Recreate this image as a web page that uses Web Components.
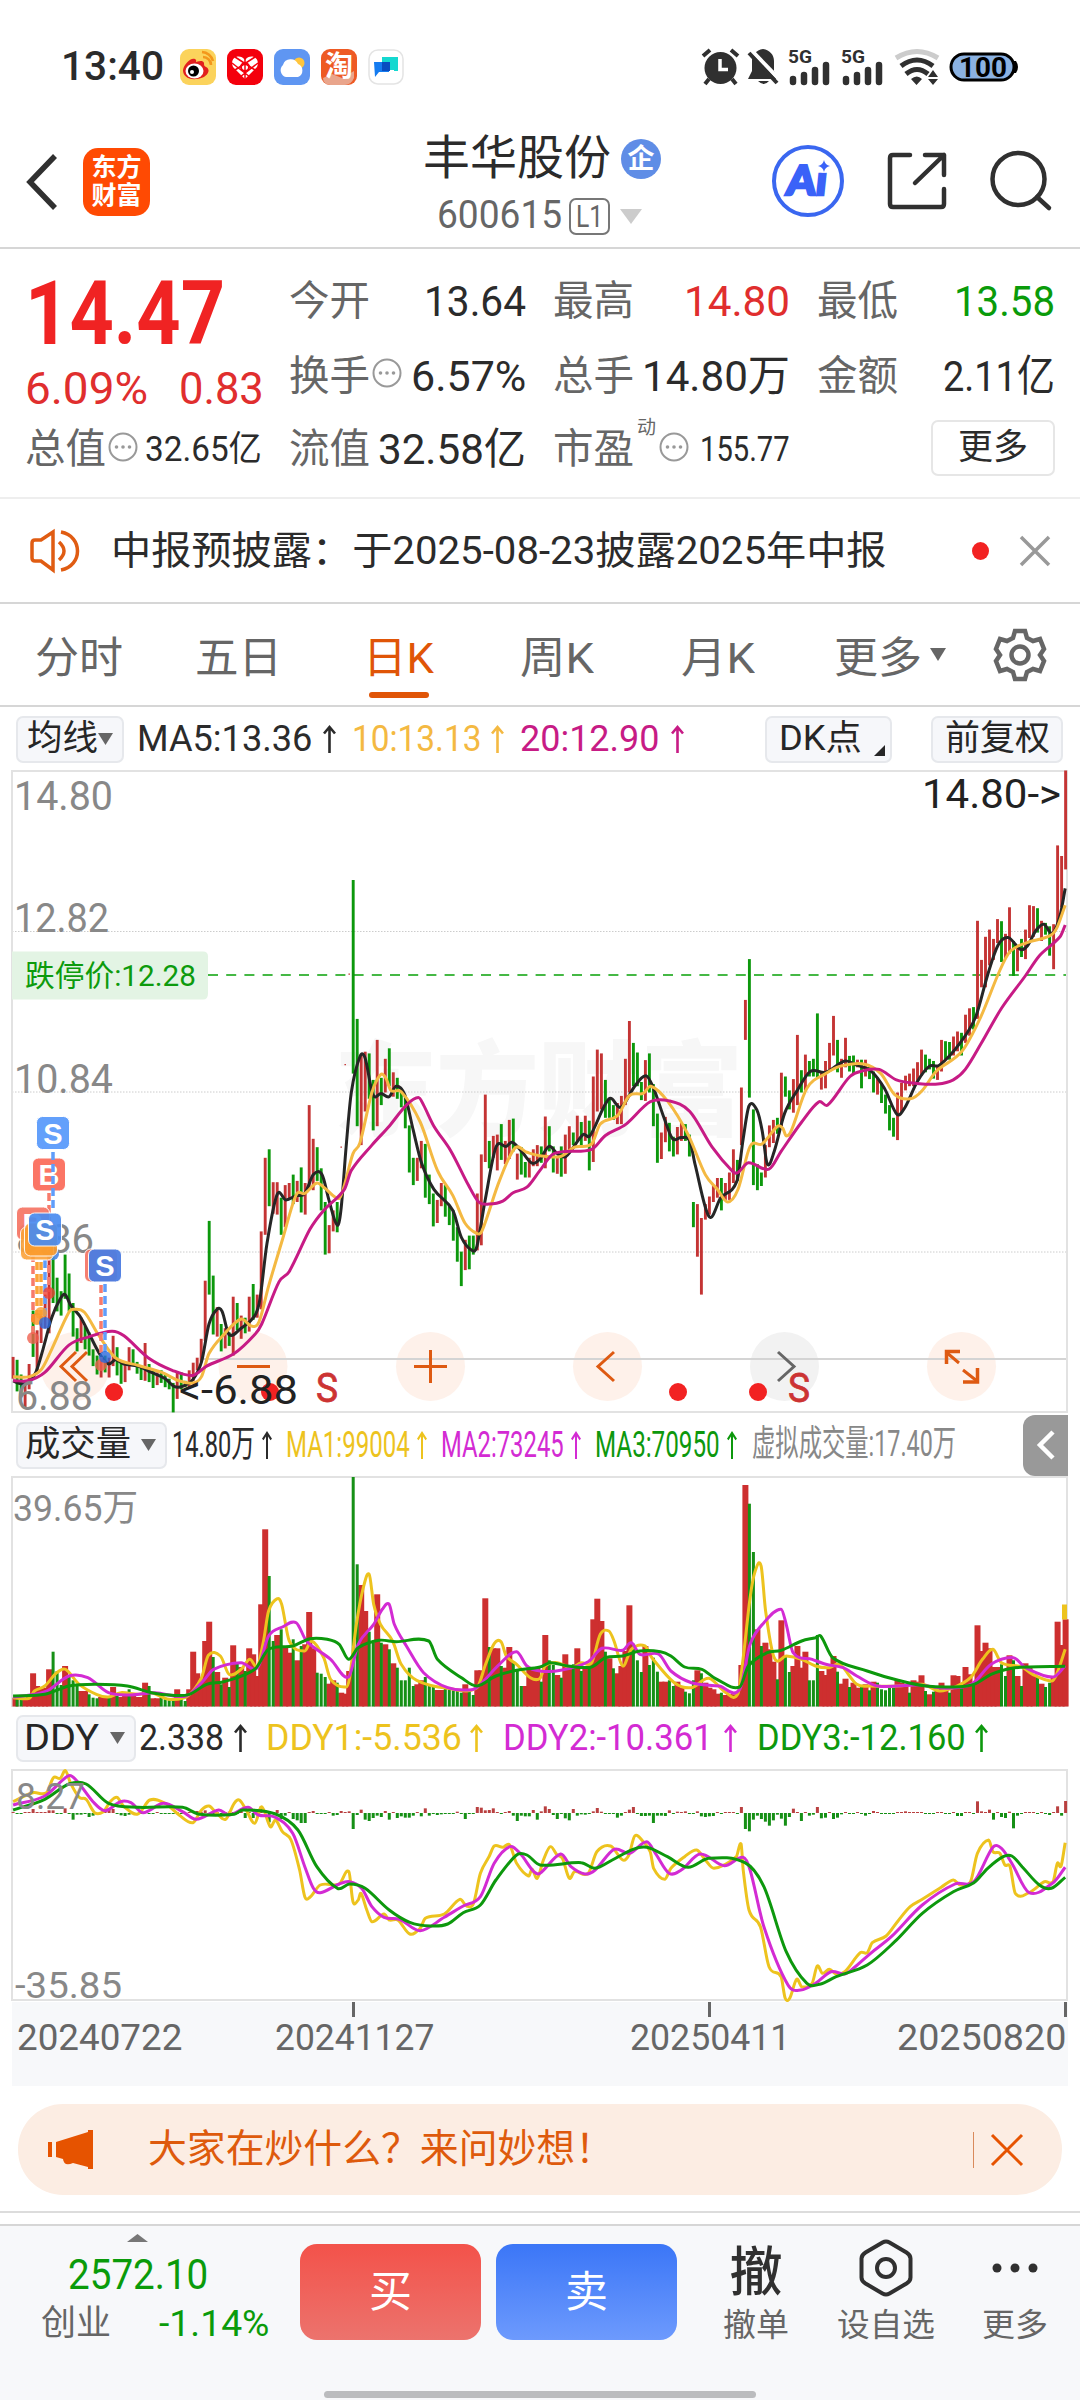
<!DOCTYPE html>
<html lang="zh-CN">
<head>
<meta charset="utf-8">
<title>丰华股份 600615</title>
<style>
  html, body { margin: 0; padding: 0; background: #fff; }
  body { width: 1080px; height: 2400px; overflow: hidden; font-family: Roboto, "Noto Sans CJK SC", sans-serif; color: #2b2b2b; }
</style>
</head>
<body>
<stock-app></stock-app>

<script>
const BASE = `
  * { box-sizing: border-box; }
  svg { display: block; flex: none; overflow: visible; }
`;

class BaseElement extends HTMLElement {
  constructor() {
    super();
    this.attachShadow({ mode: "open" });
  }

  connectedCallback() {
    this.shadowRoot.innerHTML = `<style>${BASE}${this.constructor.styles}</style>${this.template()}`;
  }
}

// One line of text squeezed or stretched to the width given in "w"
class FitText extends BaseElement {
  static get styles() {
    return `
    :host { display: block; flex: none; white-space: nowrap; line-height: 1.2; }
    span { display: inline-block; transform-origin: 0 50%; }
    `;
  }

  template() {
    return `<span><slot></slot></span>`;
  }

  connectedCallback() {
    super.connectedCallback();
    const width = Number(this.getAttribute("w"));
    const span = this.shadowRoot.querySelector("span");
    this.style.width = `${width}px`;
    span.style.transform = `scaleX(${width / span.offsetWidth})`;
  }
}
customElements.define("fit-text", FitText);

class UpArrow extends BaseElement {
  static get styles() {
    return `:host { display: block; flex: none; width: 13px; height: 28px; }`;
  }

  template() {
    return `<svg width="100%" height="28" viewBox="0 0 13 28" preserveAspectRatio="none" fill="none" stroke="currentColor" stroke-width="2.6">
      <path d="M6.5 28V2M1 8.5L6.5 2L12 8.5"/></svg>`;
  }
}
customElements.define("up-arrow", UpArrow);

class StatusBar extends BaseElement {
  static get styles() {
    return `
    :host { display: flex; align-items: center; height: 134px; padding: 0 62px 0 61px; }
    .time { font-size: 41px; font-weight: 500; margin-right: 16px; }
    .apps { display: flex; gap: 11px; }
    .signals { display: flex; align-items: center; margin-left: auto; color: #303030; }
    `;
  }

  template() {
    const bars = (x) => `
      <text x="${x}" y="14" font-size="18" font-weight="700" textLength="24" lengthAdjust="spacingAndGlyphs" fill="#303030">5G</text>
      <g stroke="#303030" stroke-width="6.500" stroke-linecap="round">
        <path d="M${x + 5} 30v3M${x + 16} 26v7M${x + 27} 21v12M${x + 38} 16v17"/></g>`;
    return `
    <fit-text class="time" w="103">13:40</fit-text>
    <div class="apps">
      <svg width="36" height="36" viewBox="0 0 36 36">
        <rect width="36" height="36" rx="9" fill="#fbd35c"/>
        <path d="M23 8a8 8 0 0 1 8 8M22 3a12 12 0 0 1 11 9" stroke="#f3971c" stroke-width="2.6" fill="none"/>
        <path d="M3 21c1-6 8-13 12-11 2 1 1 3 1 3s7-3 8 1c0 2 0 3 2 4 6 3 1 11-9 12C8 31 3 27 3 21z" fill="#e2201d"/>
        <ellipse cx="14.500" cy="22" rx="9" ry="7.500" fill="#fff"/><circle cx="13.500" cy="22" r="5.500"/><circle cx="12" cy="23" r="2" fill="#fff"/>
      </svg>
      <svg width="36" height="36" viewBox="0 0 36 36">
        <rect width="36" height="36" rx="9" fill="#f4000c"/>
        <path d="M18 30L6 18C2 8 13 4 18 11 23 4 34 8 30 18z" fill="#fff"/>
        <path d="M5 14l18 14M8 8l20 13M31 14L13 28M28 8L8 21M18 6v26" stroke="#f4000c" stroke-width="1.500"/>
        <circle cx="18" cy="18" r="4" fill="none" stroke="#f4000c" stroke-width="2"/>
      </svg>
      <svg width="36" height="36" viewBox="0 0 36 36">
        <rect width="36" height="36" rx="9" fill="#5f96f2"/>
        <circle cx="25" cy="14" r="5.500" fill="#ffc53d"/>
        <path d="M12 28a7 7 0 0 1-3-12 8 8 0 0 1 15-1 7 7 0 0 1 0 13z" fill="#fff"/>
      </svg>
      <svg width="36" height="36" viewBox="0 0 36 36">
        <rect width="36" height="36" rx="9" fill="#ee5a24"/>
        <path d="M2 29l9-4 10 4 12-7v7q-3 7-9 7H9q-7-1-7-7z" fill="#e9a58c"/>
        <text x="4" y="27" font-size="28" font-weight="700" fill="#fff" font-family="Noto Sans CJK SC">淘</text>
      </svg>
      <svg width="36" height="36" viewBox="0 0 36 36">
        <rect x="1" y="1" width="34" height="34" rx="9" fill="#fff" stroke="#e4e4e4" stroke-width="1.500"/>
        <path d="M14 8h16v14h-4v-1H14z" fill="#14d8d0"/>
        <path d="M6 13h15v10H11l-4 5z" fill="#157cf0"/><rect x="14" y="13" width="8" height="9" fill="#094dc0"/>
      </svg>
    </div>
    <div class="signals">
      <svg width="316" height="36" viewBox="0 0 316 36">
        <g fill="#303030">
          <circle cx="18.500" cy="19" r="16"/>
          <path d="M1 7L8 1M29 1L36 7M7 30L3 35M30 30L34 35" stroke="#303030" stroke-width="4"/>
          <path d="M18 10v10.500h8" stroke="#fff" stroke-width="3.500" fill="none"/>
          <path d="M61 0c7 1 11 6 11 12v10l4 8H46l4-8V12c0-6 4-11 11-12zM56 32h11q-5 6-11 0z"/>
        </g>
        <path d="M50 2L78 31" stroke="#fff" stroke-width="4"/><path d="M47 4L75 34" stroke="#303030" stroke-width="4"/>
        ${bars(86)}${bars(139)}
        <g fill="none" stroke-width="5">
          <path d="M194 9q21-13 42 0" stroke="#ccc"/>
          <path d="M199 17q16-12 32 0M204 25q11-9 22 0" stroke="#303030"/>
        </g>
        <path d="M209 30q6-5 11 0l-5.500 6zM226 28l5-7 5 7zM226 30h10l-5 6z" fill="#303030"/>
        <path d="M311 12h3q4 6 0 12h-3z"/>
        <rect x="249" y="5" width="63" height="26" rx="13" fill="#8bb2e2" stroke="#000" stroke-width="3"/>
        <text x="257" y="27.500" font-size="27" font-weight="700" textLength="48" lengthAdjust="spacingAndGlyphs">100</text>
      </svg>
    </div>`;
  }
}
customElements.define("status-bar", StatusBar);

class TopBar extends BaseElement {
  static get styles() {
    return `
    :host { display: grid; grid-template-columns: 360px 360px 360px; height: 115px; border-bottom: 2px solid #d6d6d6; }
    .left, .right { display: flex; align-items: center; }
    .left { padding: 0 0 18px 26px; gap: 25px; }
    .right { padding: 0 29px 19px 0; justify-content: flex-end; }
    .logo { display: grid; place-content: center; width: 67px; height: 68px; border-radius: 15px; background: #ff4a03;
      color: #fff; font-size: 25px; font-weight: 700; line-height: 28px; }
    .name { display: flex; align-items: center; padding-left: 63px; height: 49px; gap: 10px; font-size: 47px; }
    .badge { display: grid; place-content: center; width: 40px; height: 40px; border-radius: 50%; background: #5f8de6;
      color: #fff; font-size: 27px; font-weight: 700; line-height: 38px; }
    .code { display: flex; align-items: center; padding: 6px 0 0 77px; height: 60px; font-size: 38px; color: #666; }
    .level { display: flex; align-items: center; height: 37px; margin-left: 7px; padding: 0 5px; border: 2px solid #777; border-radius: 7px; font-size: 32px; }
    .tri { margin-left: 10px; }
    `;
  }

  template() {
    return `
    <div class="left">
      <svg width="32" height="56" viewBox="0 0 32 56" fill="none" stroke="#303030" stroke-width="5.500"><path d="M29 2L4 28L29 54"/></svg>
      <div class="logo"><span>东方</span><span>财富</span></div>
    </div>
    <div class="title">
      <div class="name"><fit-text w="188">丰华股份</fit-text><span class="badge">企</span></div>
      <div class="code"><fit-text w="125">600615</fit-text><span class="level"><fit-text w="27">L1</fit-text></span>
        <svg class="tri" width="22" height="15"><path d="M0 0h22l-11 15z" fill="#ccc"/></svg></div>
    </div>
    <div class="right">
      <svg width="280" height="76" viewBox="0 0 280 76" fill="none">
        <circle cx="37" cy="38" r="34" stroke="#3a67f0" stroke-width="4"/>
        <text transform="skewX(-6)" x="20" y="52" font-family="Lato" font-weight="900" font-size="41" fill="#3a62f8" stroke="#3a62f8" stroke-width="2.500" textLength="40" lengthAdjust="spacingAndGlyphs">Aı</text>
        <path d="M53 17q1 5 6 6-5 1-6 6-1-5-6-6 5-1 6-6z" fill="#3a62f8" stroke="#fff" stroke-width="5" paint-order="stroke"/>
        <g stroke="#303030" stroke-width="4.500" stroke-linecap="round" stroke-linejoin="round">
          <path d="M139 12h-17q-3 0-3 3v46q0 3 3 3h48q3 0 3-3V46M154 12h19v20M173 12L144 40"/>
          <circle cx="247.500" cy="36" r="26"/><path d="M266 54L278 65"/>
        </g>
      </svg>
    </div>`;
  }
}
customElements.define("top-bar", TopBar);

class QuoteBoard extends BaseElement {
  static get styles() {
    return `
    :host { display: block; height: 250px; padding-top: 15px; border-bottom: 2px solid #eee; font-size: 43px; }
    .board { display: grid; grid-template-columns: 264px 264px 264px 236px; grid-template-rows: 75px 75px 72px; padding-left: 25px; }
    .cell { display: flex; align-items: center; padding-right: 27px; }
    .cell .v { margin-left: auto; }
    .cell.edge { padding-right: 0; margin-right: -2px; }
    .k { color: #666; font-size: 41px; }
    .price { grid-row: span 2; display: flex; flex-direction: column; color: #f02323; }
    .last { font-size: 89px; font-weight: 700; line-height: 1; height: 93px; padding-top: 5px; }
    .change { display: flex; gap: 31px; padding-top: 6px; color: #e02e2e; font-size: 44px; }
    .up { color: #e02e2e; }
    .down { color: #0a9b0a; }
    .s { font-size: 35px; }
    sup { font-size: 19px; line-height: 20px; align-self: flex-start; margin: 4px 1px 0 3px; color: #666; }
    svg { margin: -7px 0 0 2px; }
    .more { display: grid; place-content: center; width: 124px; height: 56px; margin: -4px 0 0 114px; border: 2px solid #e6e6e6; border-radius: 7px; font-size: 35px; line-height: 44px; }
    `;
  }

  template() {
    const info = `<svg width="30" height="30" viewBox="0 0 30 30"><circle cx="15" cy="15" r="13.500" fill="none" stroke="#999" stroke-width="2"/>
      <g fill="#999"><circle cx="8.500" cy="15" r="1.800"/><circle cx="15" cy="15" r="1.800"/><circle cx="21.500" cy="15" r="1.800"/></g></svg>`;
    const cell = (k, v, w, cls = "", extra = "", edge = "") =>
      `<div class="cell ${edge}"><fit-text class="k" w="81">${k}</fit-text>${extra}<fit-text class="v ${cls}" w="${w}">${v}</fit-text></div>`;
    return `
    <div class="board">
      <div class="price"><fit-text class="last" w="200">14.47</fit-text>
        <div class="change"><fit-text w="123">6.09%</fit-text><fit-text w="85">0.83</fit-text></div></div>
      ${cell("今开", "13.64", 102)}
      ${cell("最高", "14.80", 106, "up")}
      ${cell("最低", "13.58", 101, "down", "", "edge")}
      ${cell("换手", "6.57%", 115, "", info)}
      ${cell("总手", "14.80万", 148)}
      ${cell("金额", "2.11亿", 112, "", "", "edge")}
      ${cell("总值", "32.65亿", 117, "s", info)}
      ${cell("流值", "32.58亿", 148)}
      ${cell("市盈", "155.77", 90, "s", "<sup>动</sup>" + info)}
      <div class="cell edge"><span class="more">更多</span></div>
    </div>`;
  }
}
customElements.define("quote-board", QuoteBoard);

class NoticeBar extends BaseElement {
  static get styles() {
    return `
    :host { display: flex; align-items: center; height: 105px; padding: 0 30px; border-bottom: 2px solid #d6d6d6; font-size: 39px; }
    fit-text { margin: 2px 85px 0 31px; }
    .dot { width: 18px; height: 18px; border-radius: 50%; background: #f22222; margin-right: 31px; }
    `;
  }

  template() {
    return `
    <svg width="50" height="44" viewBox="0 0 50 44" fill="none" stroke="#e05c12" stroke-width="3.500">
      <path d="M23 3v38L11 32H5q-3 0-3-3V14q0-3 3-3h6z"/><path d="M29 13q10 9 0 18M31 3c22 4 22 34 0 38"/></svg>
    <fit-text w="776">中报预披露：于2025-08-23披露2025年中报</fit-text>
    <span class="dot"></span>
    <svg width="30" height="30" stroke="#999" stroke-width="3.500"><path d="M1 1L29 29M29 1L1 29"/></svg>`;
  }
}
customElements.define("notice-bar", NoticeBar);

class PeriodTabs extends BaseElement {
  static get styles() {
    return `
    :host { display: flex; align-items: center; height: 103px; padding-left: 35px; border-bottom: 2px solid #d6d6d6; font-size: 43px; color: #666; }
    .tab { height: 102px; display: flex; flex-direction: column; align-items: center; justify-content: space-between; padding: 29px 0 8px; }
    .tab i { width: 60px; height: 6px; border-radius: 3px; }
    .tab.on { color: #e05507; }
    .tab.on i { background: #e05507; }
    `;
  }

  template() {
    const tabs = [["分时", 88, 72], ["五日", 87, 81], ["日K", 71, 86], ["周K", 74, 87], ["月K", 74, 79], ["更多", 88, 8]];
    return tabs.map(([name, w, gap]) => `
      <div class="tab ${name === "日K" ? "on" : ""}" style="margin-right:${gap}px"><fit-text w="${w}">${name}</fit-text><i></i></div>`).join("") + `
    <svg width="16" height="13"><path d="M0 0h16l-8 13z" fill="#666"/></svg>
    <svg style="margin-left:47px" width="54" height="54" viewBox="0 0 54 54" fill="none" stroke="#666" stroke-width="4.500">
      <path d="M22 3h10l2 7 6 3 7-2 4 10-4 6 4 6-4 10-7-2-6 3-2 7H22l-2-7-6-3-7 2-4-10 4-6-4-6 4-10 7 2 6-3z"/><circle cx="27" cy="27" r="8.500"/></svg>`;
  }
}
customElements.define("period-tabs", PeriodTabs);

// Grey rounded selector button used above every chart
class PickButton extends BaseElement {
  static get styles() {
    return `
    :host { display: flex; align-items: center; flex: none; box-sizing: border-box; height: 47px; padding-left: 9px; border: 2px solid #e6e8ec; border-radius: 7px; background: #f6f7fa; color: #262626; font-size: 35px; }
    svg { margin-left: auto; margin-right: 9px; }
    `;
  }

  template() {
    const kind = this.getAttribute("mark");
    const mark = kind === "down" ? `<svg width="15" height="12"><path d="M0 0h15l-7.500 12z" fill="#666"/></svg>`
      : kind === "corner" ? `<svg width="11" height="11" style="margin:23px 5px 0 auto"><path d="M11 0v11H0z" fill="#262626"/></svg>` : "";
    return `<slot></slot>${mark}`;
  }
}
customElements.define("pick-button", PickButton);

const LEGEND_STYLES = `
  :host { display: flex; align-items: center; box-sizing: border-box; height: 64px; padding-left: 16px; font-size: 37px; }
  .y { color: #f4b942; } .m { color: #c71b85; }
  .y2 { color: #edc31e; } .m2 { color: #d32bd3; } .g { color: #0d980d; } .n { color: #888; }
`;

class PriceLegend extends BaseElement {
  static get styles() { return LEGEND_STYLES; }

  template() {
    return `
    <pick-button mark="down" style="width:108px"><fit-text w="71">均线</fit-text></pick-button>
    <fit-text style="margin-left:13px" w="175">MA5:13.36</fit-text><up-arrow style="margin-left:11px"></up-arrow>
    <fit-text class="y" style="margin-left:16px" w="129">10:13.13</fit-text><up-arrow class="y" style="margin-left:10px"></up-arrow>
    <fit-text class="m" style="margin-left:16px" w="139">20:12.90</fit-text><up-arrow class="m" style="margin-left:12px"></up-arrow>
    <pick-button mark="corner" style="width:127px;margin-left:81px;padding-left:12px"><fit-text w="83">DK点</fit-text></pick-button>
    <pick-button style="width:132px;margin-left:39px;padding-left:12px"><fit-text w="105">前复权</fit-text></pick-button>`;
  }
}
customElements.define("price-legend", PriceLegend);

class VolumeLegend extends BaseElement {
  static get styles() {
    return LEGEND_STYLES + `
    up-arrow { width: 10px; }
    .fold { margin-left: auto; margin-right: 12px; width: 45px; height: 61px; border-radius: 12px 0 0 12px; background: #999; display: grid; place-content: center; }`;
  }

  template() {
    return `
    <pick-button mark="down" style="width:151px;padding-left:7px"><fit-text w="106">成交量</fit-text></pick-button>
    <fit-text style="margin-left:5px" w="83">14.80万</fit-text><up-arrow style="margin-left:7px"></up-arrow>
    <fit-text class="y2" style="margin-left:14px" w="124">MA1:99004</fit-text><up-arrow class="y2" style="margin-left:7px"></up-arrow>
    <fit-text class="m2" style="margin-left:14px" w="123">MA2:73245</fit-text><up-arrow class="m2" style="margin-left:7px"></up-arrow>
    <fit-text class="g" style="margin-left:14px" w="125">MA3:70950</fit-text><up-arrow class="g" style="margin-left:7px"></up-arrow>
    <fit-text class="n" style="margin-left:15px;font-size:36px" w="204">虚拟成交量:17.40万</fit-text>
    <span class="fold"><svg width="18" height="28" fill="none" stroke="#fff" stroke-width="4.500"><path d="M16 1L3 14L16 27"/></svg></span>`;
  }
}
customElements.define("volume-legend", VolumeLegend);

class DdyLegend extends BaseElement {
  static get styles() { return LEGEND_STYLES; }

  template() {
    return `
    <pick-button mark="down" style="width:120px;padding-left:6px;font-size:37px"><fit-text w="75">DDY</fit-text></pick-button>
    <fit-text style="margin-left:3px" w="85">2.338</fit-text><up-arrow style="margin-left:10px"></up-arrow>
    <fit-text class="y2" style="margin-left:19px" w="196">DDY1:-5.536</fit-text><up-arrow class="y2" style="margin-left:8px"></up-arrow>
    <fit-text class="m2" style="margin-left:20px" w="210">DDY2:-10.361</fit-text><up-arrow class="m2" style="margin-left:11px"></up-arrow>
    <fit-text class="g" style="margin-left:20px" w="209">DDY3:-12.160</fit-text><up-arrow class="g" style="margin-left:9px"></up-arrow>`;
  }
}
customElements.define("ddy-legend", DdyLegend);

/* Chart data. Sessions are 11.62 units apart; a unit is 1/2.9037 px wide.
   The second half of every curve starts again at 0 (1568 units in). */
const UNIT = 2.9037;
const sessionX = (i) => (38 + 11.62 * i) / UNIT;

// colour, high, low
const CANDLES = `r1418-1470 g1425-1500 g1460-1510 r1480-1540 r1435-1495 g1308-1418 r1355-1450 r1320-1385 r1270-1350 r1190-1362
g1180-1290 g1230-1310 g1262-1320 g1175-1280 g1220-1310 g1290-1370 g1350-1405 r1325-1385 g1345-1400 g1360-1415
g1400-1440 g1415-1460 r1420-1467 g1415-1455 r1420-1467 r1368-1440 g1395-1462 g1430-1482 r1430-1478 r1395-1450
g1400-1440 g1430-1458 g1440-1473 r1385-1475 g1435-1478 g1450-1492 r1455-1485 g1450-1480 g1460-1490 g1470-1495
g1480-1550 r1455-1518 g1455-1495 g1475-1490 r1450-1490 r1432-1475 r1420-1450 r1375-1430 r1237-1380 g1095-1270
g1225-1365 r1300-1370 g1340-1405 r1350-1398 g1360-1392 r1275-1415 g1290-1355 r1320-1375 g1325-1362 r1275-1358
g1245-1330 r1270-1325 r1120-1305 r945-1128 g925-1060 r1003-1078 r1003-1080 g1040-1128 r1010-1110 r1005-1045
g985-1055 r1000-1050 g968-1075 r1005-1080 r820-1020 r900-1022 g920-1000 g970-1070 g1050-1175 r1105-1172
r1070-1120 g1050-1122 r918-921 r722-725 r507-510 g285-745 g615-870 r700-915 r693-835 g697-805
g760-880 r665-870 g755-820 r710-790 g685-775 r742-800 g755-805 g780-825 g800-875 g868-980
g945-1010 r945-1000 r905-970 g912-1040 g985-1055 g1030-1108 r1045-1100 r1005-1060 g1010-1085 g1060-1105
g1070-1142 g1110-1192 g1168-1250 r1140-1212 g1130-1210 g1130-1175 r1030-1165 r937-1153 r795-955 g905-970
r893-945 r890-975 g865-950 r905-960 r855-948 g852-930 r935-997 g920-985 g955-992 r945-992
r925-965 r915-965 g918-957 r847-970 g870-930 g918-980 r945-983 g918-990 r890-983 r870-930
g885-915 r845-905 g860-915 r845-905 g857-975 r752-955 r688-835 r697-830 g760-850 g805-850
g820-855 r815-865 r798-865 r710-820 r620-790 g672-775 g695-775 g765-808 r713-810 g697-790
g770-870 g840-957 r885-948 r848-908 g862-930 g895-942 r872-937 r862-905 g865-905 g890-942
g1050-1110 r1055-1180 r1088-1270 r1055-1092 r1037-1080 r1010-1050 r993-1040 g993-1070 r1005-1045 r980-1045
r925-1005 g950-1000 r778-915 r570-665 g473-802 g830-1010 g960-1022 g980-1012 r915-992 r868-920
r855-910 g850-888 r743-870 g752-800 g785-830 r758-838 r653-820 g737-790 r700-785 g715-752
g710-752 g602-755 r740-783 r715-780 r672-735 r608-702 g665-742 r710-755 r660-730 g703-740
g702-748 r712-730 g712-780 r712-752 g728-758 g740-790 r755-795 g768-815 g795-840 g820-880
g850-895 r790-903 r767-838 r750-785 r745-775 r733-775 r718-762 r688-750 g700-742 g710-735
g715-757 r725-760 r665-740 g668-712 g670-712 r657-702 r645-692 g648-702 r605-672 r590-655
g587-640 r382-615 r475-540 r420-540 r403-488 r425-475 r378-435 g383-480 r413-472 r350-460
g430-513 r440-502 g425-468 r403-473 r345-423 r347-420 g352-410 r382-430 g387-415 g395-465
r390-497 r203-390 r228-350 r25-260`.split(/\s+/);

// colour, top of the bar
const VOLUMES = `r860 g865 g865 r862 r855 r787 r825 r830 r830 r775 g722 g780 g822 r765 g795 g808 g825 r840 r840 g850
g860 g862 r858 r855 g855 r828 g855 r858 r855 g835 r850 r858 r858 r815 g825 r862 r862 g858 g865 g868
g868 r835 g858 g870 r835 r722 r787 r808 r690 r632 g738 r783 g820 r800 g828 r703 g755 r768 g780 r712
r730 r795 r580 r355 g495 g690 r672 g655 r708 r725 g685 r748 g705 r700 r603 r712 g785 g788 g798 r818
r808 g815 r845 r848 r780 g198 g460 r522 r600 g662 g695 r550 g695 r700 g715 r757 g770 g808 g808 g770
g825 r820 r808 g798 g822 g822 r837 r837 g832 g835 g838 g838 g845 r820 g838 g852 r778 r778 r562 g708
r712 r712 g765 r770 r708 g752 g778 g825 r825 r775 r770 r770 g812 r672 g748 g762 r792 g800 r730 r768
g760 r712 g780 r770 g765 r625 r563 r630 g722 r742 g772 r787 r765 r720 r583 g698 g748 g783 r705 g762
g740 g782 r812 r812 g808 g825 r812 r830 g842 g847 g808 r778 g787 r815 r830 r835 r848 g845 r852 r850
r850 r852 r762 r222 g278 g423 r655 g705 r695 r715 r752 g805 r628 g735 g783 r765 r705 r770 r722 g808
g808 g672 r780 r792 r770 r735 g782 r818 r803 g828 r815 r830 g825 r820 g838 r812 g815 g835 g838 g830
g830 r808 r815 r822 g845 r808 r812 r793 g840 r850 g842 r840 r815 r830 g845 r793 r795 g825 r768 r790
g818 r643 r720 r695 r712 r768 r768 g760 g795 r733 g748 r795 g825 r757 r768 r790 g798 r818 g828 g815
r800 r632 r702 r625`.split(/\s+/);

// session: height of the DDY bar, negative is downwards
const DDY_BARS = { 5: 12, 9: 8, 10: 8, 13: 14, 15: -20, 16: -5, 17: -5, 19: -12, 20: -8, 23: 12, 24: 10, 25: 12, 27: -7, 28: -9, 29: -5,
  46: 6, 47: 4, 48: 8, 54: 4, 57: 10, 58: -15, 60: -15, 62: 20, 64: -28, 66: 9, 67: -18, 68: -8, 70: -18, 71: -22, 72: -30, 73: -30,
  75: 6, 80: -8, 81: -6, 82: 6, 84: 5, 85: -48, 86: -6, 87: 10, 88: -20, 89: -24, 90: -15, 91: -8, 92: -12, 93: 6, 94: -20, 96: -15,
  97: -10, 98: -14, 99: -14, 100: -8, 102: -10, 103: 14, 104: -8, 106: -6, 107: -4, 111: 4, 113: -18, 116: 18, 117: 16, 118: 8, 119: 9,
  120: 14, 124: 6, 125: -8, 126: -24, 127: -8, 128: -10, 129: -10, 130: 9, 131: -20, 132: 5, 133: 20, 134: 12, 135: -6, 136: -18,
  138: -16, 139: -22, 140: 12, 141: -8, 142: -4, 143: -5, 145: 5, 146: 15, 147: 4, 151: -14, 152: -8, 154: 10, 155: 18, 157: -9,
  158: -9, 159: -8, 160: -30, 161: -8, 162: -8, 163: -9, 164: 8, 166: 4, 168: 5, 171: 5, 172: -10, 173: -12, 174: -10, 175: -9,
  182: 18, 183: -48, 184: -55, 185: -20, 186: -8, 187: -18, 188: -26, 189: -38, 190: -22, 191: -5, 192: -17, 193: -38, 194: -12,
  195: 13, 197: -24, 199: -8, 200: -5, 201: 18, 202: -16, 203: -14, 205: -18, 206: -14, 207: -4, 213: -8, 215: 6, 223: 5, 236: -9,
  237: -9, 241: 35, 242: 5, 244: 10, 245: -20, 247: -12, 248: -15, 249: 4, 250: -46, 251: -8, 259: -6, 261: 20, 262: -8, 263: 36 };

const CURVES = {
  ma5: ["38,1475 61,1482 84,1478 104,1455 125,1400 150,1325 175,1280 189,1270 205,1295 235,1325 260,1365 290,1412 315,1435 335,1425 360,1435 400,1440 440,1455 480,1470 505,1488 530,1488 560,1472 585,1430 607,1340 630,1305 645,1310 665,1365 700,1350 740,1320 755,1280 775,1150 805,1032 830,1045 860,1035 885,1030 910,985 935,985 955,1045 979,1105 990,1070 1005,920 1020,790 1045,705 1060,708 1083,795 1107,792 1130,800 1150,775 1175,795 1200,880 1225,960 1260,1020 1315,1070 1340,1135 1372,1166 1385,1155 1410,1040 1440,920 1470,918 1487,908 1515,930 1545,958",
    "0,948 26,918 50,935 75,942 125,890 145,893 200,805 235,825 275,775 308,750 330,780 360,850 385,900 410,897 435,905 450,960 491,1085 525,1040 572,1000 590,900 607,822 630,832 645,880 660,960 680,930 710,840 747,785 785,740 830,742 885,715 920,725 960,738 1000,780 1037,842 1060,825 1095,765 1130,728 1160,725 1220,672 1265,610 1300,510 1330,440 1360,422 1395,450 1415,442 1440,405 1463,390 1488,412 1510,370 1525,305"],
  ma10: ["38,1465 85,1465 120,1448 150,1400 200,1312 215,1305 245,1312 285,1365 335,1420 400,1438 470,1455 520,1475 560,1480 585,1465 607,1410 650,1365 700,1328 730,1345 752,1335 780,1250 820,1140 860,1033 885,1030 920,1005 940,1015 985,1042 1000,1010 1025,935 1045,910 1080,790 1105,748 1120,755 1135,785 1165,788 1220,860 1270,975 1315,1035 1350,1100 1385,1125 1400,1118 1450,1000 1495,922 1530,932",
    "0,940 60,942 100,920 150,912 175,865 225,845 260,797 300,792 322,775 370,810 430,890 480,985 515,1020 545,1050 575,1020 610,918 645,912 690,870 705,875 715,893 730,880 775,780 830,745 870,728 940,722 990,745 1030,795 1075,805 1110,785 1150,740 1225,692 1280,610 1335,500 1365,455 1410,435 1480,418 1500,400 1525,345"],
  ma20: ["38,1474 80,1475 130,1455 200,1390 260,1370 325,1357 360,1368 430,1420 500,1450 560,1462 600,1440 680,1410 740,1365 760,1340 810,1240 840,1215 900,1115 940,1070 1000,1020 1020,975 1080,915 1130,870 1180,820 1215,802 1230,820 1260,870 1310,930 1360,1010 1390,1050 1420,1055 1460,1048 1490,1028 1530,1015",
    "0,975 40,935 150,925 190,892 250,865 320,812 375,810 435,835 500,920 560,978 575,980 605,957 665,972 700,930 760,860 810,812 835,820 900,752 940,738 985,735 1035,760 1090,768 1155,770 1200,760 1235,735 1280,675 1340,590 1410,512 1450,465 1510,420 1525,392"],
  vol1: ["38,860 85,862 100,840 130,825 165,785 190,775 230,820 280,850 315,858 350,845 400,850 440,845 490,865 545,855 585,800 605,733 640,735 665,790 700,775 725,745 748,765 765,690 780,600 805,563 818,580 840,690 885,720 905,690 940,740 960,805 1005,828 1015,800 1035,640 1055,530 1072,490 1085,580 1105,640 1140,690 1165,760 1210,808 1300,832 1385,830 1410,760 1435,698 1455,692 1470,735 1500,760 1540,800",
    "0,802 15,765 50,755 90,770 120,755 150,755 175,670 200,660 215,690 240,765 265,715 305,705 325,740 390,815 440,830 490,802 540,845 575,848 590,740 610,560 625,480 642,465 655,600 680,740 715,735 760,745 800,765 840,770 870,760 920,820 960,825 1040,825 1110,820 1160,840 1200,830 1250,800 1285,745 1315,715 1340,755 1400,768 1430,790 1485,810 1500,790 1525,715"],
  vol2: ["38,858 100,850 140,838 200,795 255,800 315,845 380,852 450,845 540,855 590,810 620,775 700,755 748,770 780,675 820,648 860,635 890,690 960,745 1012,798 1040,700 1085,640 1110,595 1130,580 1145,640 1180,705 1230,785 1300,830 1370,836 1395,820 1450,760 1500,722 1530,765",
    "0,780 60,778 140,752 180,712 240,718 265,695 290,730 345,730 380,780 440,815 520,825 580,835 610,700 650,635 700,595 715,640 735,725 790,745 830,760 880,770 920,795 980,825 1100,822 1180,832 1255,818 1310,760 1375,740 1410,770 1490,798 1525,765"],
  vol3: ["38,855 130,850 200,825 280,820 370,825 440,845 500,853 550,850 600,820 650,812 740,775 780,715 850,705 900,683 950,685 985,700 1012,745 1040,710 1100,688 1150,692 1245,690 1270,745 1340,800 1385,825 1440,795 1500,778",
    "0,768 30,755 80,765 150,768 190,740 240,735 290,720 350,722 380,735 420,768 470,775 510,803 580,828 605,765 660,725 700,718 760,690 800,680 815,675 850,740 950,780 1040,808 1120,825 1200,828 1260,820 1310,790 1370,772 1420,768 1525,766"],
  ddy1: ["38,275 95,248 135,248 155,203 175,205 190,182 205,220 230,262 250,268 275,308 300,305 320,275 340,262 360,290 400,312 435,270 480,280 520,315 560,338 585,300 607,288 625,305 655,328 680,280 695,270 715,300 740,340 760,290 785,350 800,330 820,365 845,390 870,480 885,560 900,562 930,525 985,522 1013,485 1025,575 1040,570 1048,550 1065,600 1080,635 1115,612 1130,630 1155,630 1190,672 1220,655 1235,625 1290,612 1335,568 1355,588 1375,580 1395,490 1420,440 1435,408 1460,412 1480,405 1500,460 1535,498 1545,478 1560,505",
    "10,450 30,410 50,435 65,445 85,505 100,485 140,490 165,425 205,408 240,450 258,435 275,378 300,395 320,425 330,475 362,508 380,475 420,440 455,420 480,450 505,475 570,440 584,402 590,480 607,600 640,650 665,770 700,800 712,865 725,865 745,808 760,830 790,820 805,768 820,790 840,778 860,792 885,785 930,728 950,728 965,698 1005,678 1040,632 1075,590 1110,568 1165,532 1200,510 1220,525 1250,515 1270,430 1303,390 1315,425 1335,430 1350,465 1365,470 1380,550 1420,548 1465,515 1490,515 1502,460 1513,468 1525,398"],
  ddy2: ["38,285 130,258 200,197 225,215 270,275 305,302 350,275 380,278 415,308 475,280 530,305 570,328 635,300 665,315 720,292 750,315 800,322 850,370 885,470 910,535 930,548 985,522 1015,515 1050,535 1080,590 1115,622 1160,628 1220,662 1290,622 1345,588 1395,560 1435,460 1480,410 1510,430 1550,485",
    "0,490 60,432 90,470 130,492 160,480 215,418 260,430 310,395 335,430 375,490 410,480 465,432 535,467 590,442 610,480 650,650 720,825 757,840 800,820 845,785 885,792 910,775 960,730 1020,680 1110,585 1205,522 1260,515 1315,412 1340,415 1370,460 1420,548 1490,518 1525,472"],
  ddy3: ["38,300 130,268 200,222 250,222 315,280 400,292 530,292 580,313 680,313 705,300 800,312 865,360 920,470 980,535 1015,522 1060,535 1130,600 1190,637 1250,648 1300,642 1345,608 1395,585 1440,510 1500,435 1530,435",
    "0,465 120,458 160,475 210,450 270,418 310,412 370,440 430,472 490,445 595,458 650,530 715,725 775,820 815,822 860,800 950,765 1030,695 1110,610 1200,545 1260,518 1300,475 1345,440 1370,438 1400,470 1450,525 1485,535 1525,502"],
};

// Catmull-Rom through the points of both halves
function curve(name, toY, color) {
  const pts = CURVES[name].flatMap((half, k) => half.split(" ").map((p) => {
    const [x, y] = p.split(",").map(Number);
    return [(x + k * 1568) / UNIT, toY(y)];
  }));
  let d = `M${pts[0].join(" ")}`;
  for (let i = 0; i < pts.length - 1; i++) {
    const a = pts[i - 1] || pts[i], b = pts[i], c = pts[i + 1], e = pts[i + 2] || c;
    const dx = (c[0] - b[0]) / 3;
    const s1 = (c[1] - a[1]) / (c[0] - a[0]), s2 = (e[1] - b[1]) / (e[0] - b[0]);
    d += `C${[b[0] + dx, b[1] + s1 * dx, c[0] - dx, c[1] - s2 * dx, c[0], c[1]].map((n) => n.toFixed(1)).join(" ")}`;
  }
  return `<path d="${d}" fill="none" stroke="${color}" stroke-width="3" stroke-linejoin="round"/>`;
}

const label = (x, y, w, size, text, color = "#888") =>
  `<text x="${x}" y="${y}" font-size="${size}" fill="${color}" textLength="${w}" lengthAdjust="spacingAndGlyphs">${text}</text>`;

const CHART_STYLES = `:host { display: block; } text { font-family: Roboto, "Noto Sans CJK SC", sans-serif; }`;

class PriceChart extends BaseElement {
  static get styles() { return CHART_STYLES; }

  template() {
    const toY = (y) => 760 + y / 2.3758;
    const candles = CANDLES.map((bar, i) => {
      const [high, low] = bar.slice(1).split("-").map(Number);
      // single-price sessions are only a speck
      const w = low - high < 5 ? ' stroke-width="1.5"' : "";
      return `<path d="M${sessionX(i).toFixed(1)} ${toY(high).toFixed(1)}V${toY(low).toFixed(1)}" stroke="${bar[0] === "r" ? "#c43434" : "#0c980c"}"${w}/>`;
    }).join("");
    const grid = [931.500, 1092, 1252].map((y) => `<path d="M12 ${y}H1067" stroke="#ccc" stroke-width="1" stroke-dasharray="1.500 1.500"/>`).join("");
    const box = (x, y, color, opacity = 0.9) =>
      `<rect x="${x}" y="${y}" width="33" height="33" rx="6" fill="${color}" opacity="${opacity}" stroke="#fff" stroke-width="1"/>`;
    const mark = (x, y, letter, color, opacity) => box(x, y, color, opacity) + `
      <text x="${x + 16.5}" y="${y + 27}" text-anchor="middle" style="font-family:'Liberation Sans'" font-weight="700" font-size="29" fill="#fff">${letter}</text>`;
    const drop = (x, y1, y2, color) => `<path d="M${x} ${y1}V${y2}" stroke="${color}" stroke-width="3.500" stroke-dasharray="8 4"/>`;
    const dot = (x, y, r, color, o = 1) => `<circle cx="${x}" cy="${y}" r="${r}" fill="${color}" opacity="${o}"/>`;
    const round = (x, color = "#fef1ea") => `<circle cx="${x}" cy="1366.500" r="34.500" fill="${color}"/>`;
    return `
    <svg width="1080" height="642" viewBox="0 771 1080 642">
      <text x="334" y="1128" font-size="103" font-weight="900" fill="#f7f7f7" textLength="409">东方财富</text>
      ${round(75)}${round(253)}${round(430.500)}${round(607.500)}${round(784.500, "#f2f2f2")}${round(961.500)}
      ${grid}
      <path d="M200 1359H1067" stroke="#d4d4d4" stroke-width="2"/>
      <path d="M208 975H1067" stroke="#45b845" stroke-width="2" stroke-dasharray="10 8.200"/>
      <rect x="12" y="771" width="1055" height="641" fill="none" stroke="#e2e2e2" stroke-width="2"/>
      <path d="M12 951.500H203q5 0 5 5v37q0 6-5 6H12z" fill="#e3f4e4"/>
      ${label(25, 986, 171, 30, "跌停价:12.28", "#0d9b0d")}
      <g stroke-width="2.900">${candles}</g>
      ${curve("ma5", toY, "#262626")}${curve("ma10", toY, "#f4b942")}${curve("ma20", toY, "#c71b85")}
      <g fill="none" stroke="#de5a12" stroke-width="3">
        <path d="M76 1352L61 1366.500L76 1381M87 1352L72 1366.500L87 1381"/>
        <path d="M237 1366.500h33M414 1366.500h33M430.500 1350v33M614 1352L598 1366.500L614 1381"/>
        <path d="M959 1363L946 1352M963 1370L977 1381"/><path d="M960 1351.500H946.500V1364M963 1382H977.500V1368" stroke-width="3.500"/>
      </g>
      <path d="M778 1352L794 1366.500L778 1381" fill="none" stroke="#666" stroke-width="3"/>
      ${label(14, 810, 99, 41, "14.80")}${label(14, 932, 95, 41, "12.82")}${label(14, 1093, 99, 41, "10.84")}
      ${label(16, 1253, 78, 41, "8.86")}${label(16, 1410, 77, 41, "6.88")}
      ${drop(33, 1254, 1336, "#f77b6b")}${drop(37, 1262, 1315, "#fba437")}${drop(41, 1262, 1315, "#fba437")}
      ${drop(45, 1248, 1320, "#609dfa")}${drop(49, 1193, 1292, "#f77b6b")}
      ${drop(101, 1285, 1360, "#f77b6b")}${drop(105, 1284, 1356, "#609dfa")}
      ${dot(33, 1338, 6, "#f0604f", .8)}${dot(37, 1319, 6, "#fb8c1e", .8)}${dot(41, 1313, 6, "#fb9c2e", .8)}${dot(45, 1323, 6, "#2a6be0", .8)}
      ${dot(49, 1293, 6, "#ee4034", .8)}${dot(53, 1254, 6, "#4a86e4", .9)}${dot(101, 1365, 6, "#f0604f", .8)}${dot(105, 1357, 6, "#2a6be0", .8)}
      ${mark(36.500, 1116.500, "S", "#5396fb")}${mark(32.500, 1158, "B", "#fb7565", 1)}
      ${drop(53, 1152, 1208, "#609dfa")}
      ${mark(16.500, 1207, "B", "#f67969", .95)}
      ${box(20.500, 1227, "#fca33a")}${box(24.500, 1223, "#fb9c2e")}
      ${mark(28.500, 1213, "S", "#4a8cf0", .92)}
      ${box(84.500, 1249, "#f67969", .95)}${mark(88.500, 1249, "S", "#4c7de2", .95)}
      ${dot(114, 1392, 9, "#f22222")}${dot(270, 1392, 9, "#f22222")}${dot(678, 1392, 9, "#f22222")}${dot(758, 1392, 9, "#f22222")}
      <g stroke="#c33" stroke-width=".8">${label(316, 1402, 22, 41, "S", "#c33")}${label(788, 1402, 22, 41, "S", "#c33")}</g>
      ${label(179, 1404, 119, 40, "&lt;-6.88", "#222")}
      ${label(922, 808, 139, 40, "14.80-&gt;", "#222")}
    </svg>`;
  }
}
customElements.define("price-chart", PriceChart);

class VolumeChart extends BaseElement {
  static get styles() { return CHART_STYLES; }

  template() {
    const toY = (y) => 1410 + y / 3;
    const bars = VOLUMES.map((bar, i) => {
      const red = bar[0] === "r", w = red ? 6 : 3, y = toY(Number(bar.slice(1)));
      const x = Math.max(sessionX(i) - w / 2, 12.5);
      return `<rect x="${x.toFixed(1)}" y="${y.toFixed(1)}" width="${w}" height="${(1705.500 - y).toFixed(1)}" fill="${red ? "#cd2f2f" : "#169016"}"/>`;
    });
    // the wide red bars go under the narrow green ones
    const sorted = bars.filter((b) => b.includes("#cd")).concat(bars.filter((b) => b.includes("#16")));
    return `
    <svg width="1080" height="229" viewBox="0 1476 1080 229">
      <rect x="12" y="1476" width="1055" height="229" fill="none" stroke="#e2e2e2" stroke-width="2"/>
      ${label(13, 1519.500, 125, 37, "39.65万")}
      ${sorted.join("")}
      <rect x="1062" y="1603.500" width="5" height="15" fill="#edc31e"/>
      ${curve("vol1", toY, "#edc31e")}${curve("vol2", toY, "#d32bd3")}${curve("vol3", toY, "#0d980d")}
    </svg>`;
  }
}
customElements.define("volume-chart", VolumeChart);

class DdyChart extends BaseElement {
  static get styles() { return CHART_STYLES; }

  template() {
    const toY = (y) => 1710 + y / 3;
    let bars = "";
    for (let i = 0; i < 264; i++) {
      const v = DDY_BARS[i] || (CANDLES[i][0] === "r" ? 2 : -2);
      const h = Math.max(Math.abs(v) / 3, 1);
      bars += `<rect x="${(sessionX(i) - 1.500).toFixed(1)}" y="${v > 0 ? 1813 - h : 1813}" width="3" height="${h}" fill="${v > 0 ? "#b94040" : "#169016"}"/>`;
    }
    return `
    <svg width="1080" height="232" viewBox="0 1770 1080 232">
      <rect x="12" y="1770" width="1055" height="230" fill="none" stroke="#e2e2e2" stroke-width="2"/>
      ${bars}
      ${curve("ddy1", toY, "#edc31e")}${curve("ddy2", toY, "#d32bd3")}${curve("ddy3", toY, "#0d980d")}
      ${label(16, 1809, 69, 37, "8.27")}${label(15, 1998, 107, 37, "-35.85")}
    </svg>`;
  }
}
customElements.define("ddy-chart", DdyChart);

class DateAxis extends BaseElement {
  static get styles() {
    return `
    :host { display: flex; align-items: flex-start; box-sizing: border-box; height: 84px; margin: 0 12px; padding: 14px 2px 0 5px; background: #f7f8fa; color: #666; font-size: 37px; position: relative; }
    i { position: absolute; top: 0; width: 3px; height: 15px; background: #666; }
    `;
  }

  template() {
    return `
    <i style="left:340px"></i><i style="left:696px"></i><i style="left:1052px"></i>
    <fit-text w="165">20240722</fit-text>
    <fit-text w="159" style="margin-left:93px">20241127</fit-text>
    <fit-text w="160" style="margin-left:196px">20250411</fit-text>
    <fit-text w="169" style="margin-left:107px">20250820</fit-text>`;
  }
}
customElements.define("date-axis", DateAxis);

class AskBanner extends BaseElement {
  static get styles() {
    return `
    :host { display: flex; align-items: center; box-sizing: border-box; height: 91px; margin: 18px 18px 16px; padding: 0 39px 0 30px; border-radius: 45px; background: #fcede3; color: #de5a0c; font-size: 39px; }
    fit-text { margin-left: 54px; }
    i { width: 1.5px; height: 36px; background: #d98a5c; margin: 0 17px 0 auto; }
    `;
  }

  template() {
    return `
    <svg width="46" height="39" viewBox="0 0 46 39" fill="#e65300"><path d="M0 12h4v15H0zM8 12L40 2V0h5v39h-5v-2l-15-4q-9 4-10-4l-7-2z"/></svg>
    <fit-text w="466">大家在炒什么？来问妙想！</fit-text>
    <i></i>
    <svg width="32" height="32" stroke="#e65300" stroke-width="3"><path d="M1 1L31 31M31 1L1 31"/></svg>`;
  }
}
customElements.define("ask-banner", AskBanner);

class TradeBar extends BaseElement {
  static get styles() {
    return `
    :host { display: flex; flex-direction: column; box-sizing: border-box; height: 177px; border-top: 2px solid #d6d6d6; margin-top: 11px; background: #f7f8fa; }
    .row { display: flex; height: 163px; }
    .index { width: 300px; padding: 8px 0 0 41px; color: #0a9b0a; }
    .index .tri { margin-left: 86px; }
    .value { margin: 7px 0 0 27px; font-size: 43px; }
    .sub { display: flex; align-items: center; gap: 48px; font-size: 37px; margin-top: 1px; }
    .sub .k { color: #666; font-size: 35px; }
    .trade { width: 181px; height: 96px; margin: 18px 15px 0 0; border-radius: 17px; display: grid; place-content: center; color: #fff; font-size: 43px; line-height: 90px; }
    .buy { background: linear-gradient(#f3524a, #ec736d); }
    .sell { background: linear-gradient(#3b76f7, #6d9afd); }
    .tool { display: flex; flex-direction: column; align-items: center; padding-top: 8px; color: #666; font-size: 32px; }
    .tool > :first-child { height: 72px; padding-bottom: 5px; display: grid; place-content: center; color: #303030; }
    .big { font-size: 53px; font-weight: 500; }
    .home { width: 432px; height: 7px; border-radius: 4px; background: #bbbcbe; margin: 2px auto 0; }
    `;
  }

  template() {
    return `
    <div class="row">
      <div class="index">
        <svg class="tri" width="21" height="8"><path d="M10.500 0L21 8H0z" fill="#777"/></svg>
        <fit-text class="value" w="140">2572.10</fit-text>
        <div class="sub"><fit-text class="k" w="70">创业</fit-text><fit-text w="110">-1.14%</fit-text></div>
      </div>
      <div class="trade buy">买</div>
      <div class="trade sell">卖</div>
      <div class="tool" style="margin-left:31px"><span class="big">撤</span><fit-text w="66">撤单</fit-text></div>
      <div class="tool" style="margin-left:48px"><span><svg width="54" height="58" viewBox="0 0 54 58" fill="none" stroke="#303030" stroke-width="4">
        <path d="M23.500 3.500q3.500-2 7 0l17 10q4 2.500 4 6v19q0 3.500-4 6l-17 10q-3.500 2-7 0l-17-10q-4-2.500-4-6v-19q0-3.500 4-6z"/><circle cx="27" cy="29" r="9"/></svg></span><fit-text w="98">设自选</fit-text></div>
      <div class="tool" style="margin-left:47px"><span><svg width="46" height="10" fill="#303030"><circle cx="5" cy="5" r="4.500"/><circle cx="23" cy="5" r="4.500"/><circle cx="41" cy="5" r="4.500"/></svg></span><fit-text w="66">更多</fit-text></div>
    </div>
    <div class="home"></div>`;
  }
}
customElements.define("trade-bar", TradeBar);

class StockApp extends BaseElement {
  static get styles() {
    return `
    :host { display: flex; flex-direction: column; width: 1080px; height: 2400px; background: #fff; }
    status-bar, top-bar, quote-board, notice-bar, period-tabs { flex: none; box-sizing: border-box; }
    price-legend, volume-legend, ddy-legend, price-chart, volume-chart, ddy-chart, date-axis, ask-banner { flex: none; }
    .rule { flex: none; height: 2px; background: #dcdcdc; }
    trade-bar { flex: 1; }
    `;
  }

  template() {
    return `
    <status-bar></status-bar>
    <top-bar></top-bar>
    <quote-board></quote-board>
    <notice-bar></notice-bar>
    <period-tabs></period-tabs>
    <price-legend></price-legend>
    <price-chart></price-chart>
    <volume-legend></volume-legend>
    <volume-chart></volume-chart>
    <ddy-legend></ddy-legend>
    <ddy-chart></ddy-chart>
    <date-axis></date-axis>
    <ask-banner></ask-banner>
    <div class="rule"></div>
    <trade-bar></trade-bar>`;
  }
}
customElements.define("stock-app", StockApp);
</script>
</body>
</html>
